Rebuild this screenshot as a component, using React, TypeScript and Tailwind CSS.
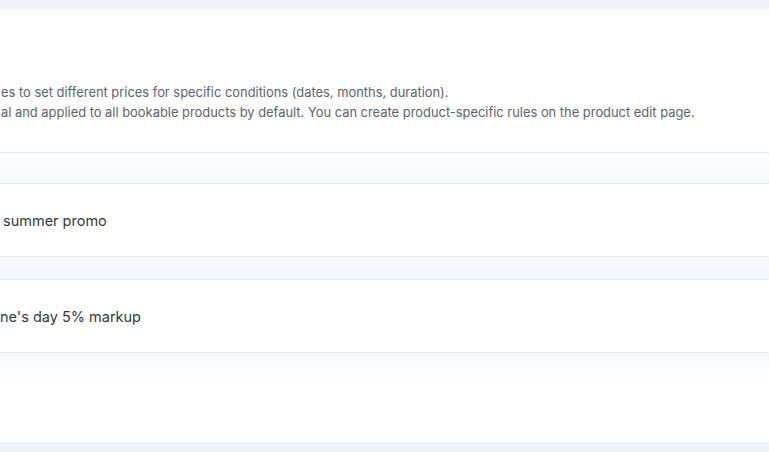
import React from "react";

const rules = ["summer promo", "ne's day 5% markup"];

const Spacer = ({ className }: { className: string }) => (
  <div className={`border-b border-[#e3e8ee] ${className}`} />
);

export default function App() {
  return (
    <div
      className="h-[452px] overflow-hidden bg-[#f0f3f8] pt-[10px]"
      style={{ fontFamily: "Inter, 'Liberation Sans', sans-serif" }}
    >
      <div className="bg-white border-b border-[#e3e8ee]">
        {/* Intro */}
        <div className="h-[143px] border-b border-[#e3e8ee] pt-[73px] text-[12.9px] leading-[20px] text-[#5b6473]">
          <p className="pl-[1px]">
            es to set different prices for specific conditions (dates, months, duration).
          </p>
          <p className="pl-[1px]">
            al and applied to all bookable products by default. You can create product-specific rules on the product edit page.
          </p>
        </div>

        <Spacer className="h-[31px] bg-gradient-to-b from-white to-[#f5f7fa]" />

        {rules.map((rule, i) => (
          <React.Fragment key={rule}>
            <div className="h-[73px] border-b border-[#e3e8ee] flex items-center pt-[2px] text-[14.5px] text-[#333840]">
              <span className={i === 0 ? "pl-[3px]" : "pl-0"}>{rule}</span>
            </div>
            {i === 0 && <Spacer className="h-[23px] bg-[#f6f8fb]" />}
          </React.Fragment>
        ))}

        <div className="h-[90px] bg-gradient-to-b from-[#f5f7fa] to-white to-[25%]" />
      </div>
    </div>
  );
}
